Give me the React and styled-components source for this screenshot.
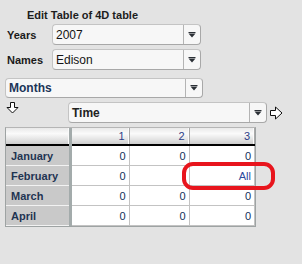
import React from "react";
import styled, { createGlobalStyle } from "styled-components";

const GlobalStyle = createGlobalStyle`
  html, body {
    margin: 0;
    padding: 0;
    background: #e3e3e3;
  }
  body {
    font-family: "Liberation Sans", Arial, sans-serif;
    font-size: 11px;
    color: #1d1d1d;
  }
`;

const Panel = styled.div`
  display: flex;
  flex-direction: column;
  width: 302px;
  height: 264px;
  padding-top: 9px;
  box-sizing: border-box;
`;

const Title = styled.div`
  font-weight: bold;
  font-size: 11px;
  padding-left: 27px;
  height: 15px;
  line-height: 13px;
`;

const FieldRow = styled.div`
  display: flex;
  align-items: center;
  height: 21px;
  margin-bottom: 4px;
`;

const Label = styled.div`
  width: 45px;
  padding-left: 7px;
  font-weight: bold;
  font-size: 11px;
  color: #1a1a1a;
`;

const ComboBox = styled.div`
  display: flex;
  width: ${(p) => p.width}px;
  height: ${(p) => p.height || 21}px;
  margin-left: ${(p) => p.offset || 0}px;
  box-sizing: border-box;
  border: 1px solid #c4c4c4;
  border-right-color: #a8a8a8;
  border-bottom-color: #a8a8a8;
  border-radius: 4px;
  background: #f7f7f7;
`;

const ComboText = styled.div`
  flex: 1;
  display: flex;
  align-items: center;
  padding-left: 3px;
  font-size: 12px;
  font-weight: ${(p) => (p.bold ? "bold" : "normal")};
  color: ${(p) => p.color || "#141414"};
`;

const ComboButton = styled.div`
  width: 16px;
  border-left: 1px solid #b4b4b4;
  display: flex;
  align-items: center;
  justify-content: center;
`;

const AxisRow = styled.div`
  display: flex;
  align-items: center;
  height: ${(p) => p.height}px;
  margin-top: 4px;
`;

const ArrowSlot = styled.div`
  width: 62px;
  padding-left: 6px;
  align-self: flex-start;
  display: flex;
`;

const ArrowRight = styled.div`
  margin-left: 3px;
  display: flex;
`;

const TableWrap = styled.div`
  position: relative;
  margin: 4px 0 0 5px;
  width: 251px;
  border: 1px solid #9ea3a3;
  border-top-color: #b5b5b5;
  box-sizing: border-box;
  background: #fff;
`;

const Grid = styled.table`
  border-collapse: collapse;
  width: 100%;
  table-layout: fixed;
`;

const HeadCell = styled.th`
  height: 16px;
  padding: 0 4px 0 0;
  text-align: right;
  font-weight: normal;
  font-size: 11px;
  color: #2d3e88;
  background: linear-gradient(#e9e9e9, #fafafa 35%, #e4e4e4 70%, #cdcdcd);
  border-right: 1px solid #a9a9a9;
  border-bottom: 2px solid #000;
  box-shadow: inset -1px 0 0 #fafafa;
`;

const CornerCell = styled(HeadCell)`
  border-right: 3px solid #a3abab;
`;

const RowHead = styled.th`
  height: 19px;
  padding: 0 0 0 5px;
  text-align: left;
  font-weight: bold;
  font-size: 11px;
  color: #1f3452;
  background: #c9c9c9;
  border-bottom: 1px solid #f2f2f2;
  border-right: 3px solid #a3abab;
`;

const DataCell = styled.td`
  height: 19px;
  padding: 0 3px 0 0;
  text-align: right;
  font-size: 11px;
  color: ${(p) => (p.all ? "#2b4a9c" : "#10305c")};
  border-bottom: 1px solid #c3c3c3;
  border-right: 1px solid #c3c3c3;
`;

/* red annotation ring drawn over the February / column 3 cell */
const Highlight = styled.div`
  position: absolute;
  left: 176px;
  right: -20px;
  top: 34px;
  height: 28px;
  box-sizing: border-box;
  border: 4px solid #e8151d;
  border-radius: 11px;
  pointer-events: none;
`;

function DropArrow() {
  return (
    <svg width="8" height="6" viewBox="0 0 8 6">
      <rect x="0.5" y="0" width="7" height="1" fill="#2a2f35" />
      <path d="M0.5 1.5 H7.5 L4 5.5 Z" fill="#2a2f35" />
    </svg>
  );
}

function DownArrow() {
  return (
    <svg width="13" height="12" viewBox="0 0 13 12">
      <path
        d="M4.5 0.5 H8.5 V5.5 H12 L6.5 11 L1 5.5 H4.5 Z"
        fill="#fff"
        stroke="#111"
        strokeWidth="1"
      />
    </svg>
  );
}

function RightArrow() {
  return (
    <svg width="13" height="14" viewBox="0 0 13 14">
      <path
        d="M0.5 4.5 H5.5 V1 L12 7 L5.5 13 V9.5 H0.5 Z"
        fill="#fff"
        stroke="#111"
        strokeWidth="1"
      />
    </svg>
  );
}

function Combo({ value, width, height, offset, bold, color }) {
  return (
    <ComboBox width={width} height={height} offset={offset}>
      <ComboText bold={bold} color={color}>
        {value}
      </ComboText>
      <ComboButton>
        <DropArrow />
      </ComboButton>
    </ComboBox>
  );
}

const months = [
  { name: "January", values: ["0", "0", "0"] },
  { name: "February", values: ["0", "", "All"] },
  { name: "March", values: ["0", "0", "0"] },
  { name: "April", values: ["0", "0", "0"] },
];

export default function App() {
  return (
    <Panel>
      <GlobalStyle />
      <Title>Edit Table of 4D table</Title>

      <FieldRow>
        <Label>Years</Label>
        <Combo value="2007" width={149} />
      </FieldRow>
      <FieldRow>
        <Label>Names</Label>
        <Combo value="Edison" width={149} />
      </FieldRow>

      <AxisRow height={20}>
        <Combo value="Months" width={198} height={20} offset={5} bold color="#1c3558" />
      </AxisRow>

      <AxisRow height={21}>
        <ArrowSlot>
          <DownArrow />
        </ArrowSlot>
        <Combo value="Time" width={199} bold color="#222" />
        <ArrowRight>
          <RightArrow />
        </ArrowRight>
      </AxisRow>

      <TableWrap>
        <Grid>
          <colgroup>
            <col style={{ width: 64 }} />
            <col style={{ width: 59 }} />
            <col style={{ width: 60 }} />
            <col />
          </colgroup>
          <thead>
            <tr>
              <CornerCell />
              <HeadCell>1</HeadCell>
              <HeadCell>2</HeadCell>
              <HeadCell>3</HeadCell>
            </tr>
          </thead>
          <tbody>
            {months.map((m) => (
              <tr key={m.name}>
                <RowHead>{m.name}</RowHead>
                {m.values.map((v, i) => (
                  <DataCell key={i} all={v === "All"}>
                    {v}
                  </DataCell>
                ))}
              </tr>
            ))}
          </tbody>
        </Grid>
        <Highlight />
      </TableWrap>
    </Panel>
  );
}
